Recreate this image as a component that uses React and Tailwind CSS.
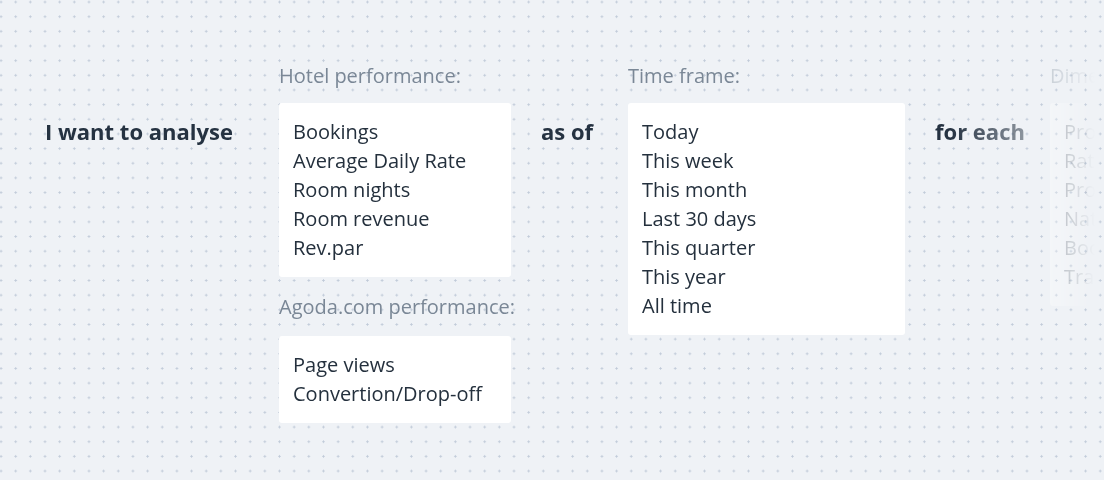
import React from "react";

const font = { fontFamily: '"Open Sans", "Noto Sans", sans-serif' };

function Label({ children, className = "" }) {
  return (
    <div className={`text-[20px] leading-[29px] text-[#7a8796] whitespace-nowrap ${className}`}>
      {children}
    </div>
  );
}

function Box({ items, className = "" }) {
  return (
    <div className={`bg-white rounded-[3px] pl-[14px] pr-[14px] pt-[14px] pb-[15px] ${className}`}>
      {items.map((it) => (
        <div key={it} className="text-[20px] leading-[29px] text-[#24303d] whitespace-nowrap">
          {it}
        </div>
      ))}
    </div>
  );
}

function Word({ children, className = "" }) {
  return (
    <div className={`shrink-0 pt-[56px] ${className}`}>
      <div className="text-[22px] leading-[29px] font-bold text-[#253241] whitespace-nowrap">
        {children}
      </div>
    </div>
  );
}

export default function App() {
  return (
    <div
      className="w-full h-[480px] overflow-hidden bg-[#eff2f6] bg-[radial-gradient(circle,#c0cad8_0.9px,transparent_1.3px)] bg-[length:14.667px_14.667px] bg-[position:-6.3px_-5.3px]"
      style={font}
    >
      <div className="flex pl-[45px] pt-[61px] [mask-image:linear-gradient(to_right,#000_950px,transparent_1095px)] [-webkit-mask-image:linear-gradient(to_right,#000_950px,transparent_1095px)]">
        <Word className="w-[234px]">I want to analyse</Word>

        <div className="w-[232px] shrink-0 flex flex-col">
          <Label>Hotel performance:</Label>
          <Box
            className="mt-[13px]"
            items={["Bookings", "Average Daily Rate", "Room nights", "Room revenue", "Rev.par"]}
          />
          <Label className="mt-[15px]">Agoda.com performance:</Label>
          <Box className="mt-[15px]" items={["Page views", "Convertion/Drop-off"]} />
        </div>

        <Word className="w-[117px] pl-[30px]">as of</Word>

        <div className="w-[277px] shrink-0 flex flex-col">
          <Label>Time frame:</Label>
          <Box
            className="mt-[13px]"
            items={["Today", "This week", "This month", "Last 30 days", "This quarter", "This year", "All time"]}
          />
        </div>

        <Word className="w-[145px] pl-[30px]">for each</Word>

        <div className="w-[232px] shrink-0 flex flex-col">
          <Label>Dimensions:</Label>
          <Box
            className="mt-[13px]"
            items={["Property", "Rate plan", "Promotion", "Nationality", "Booking window", "Traveller type"]}
          />
        </div>
      </div>
    </div>
  );
}
